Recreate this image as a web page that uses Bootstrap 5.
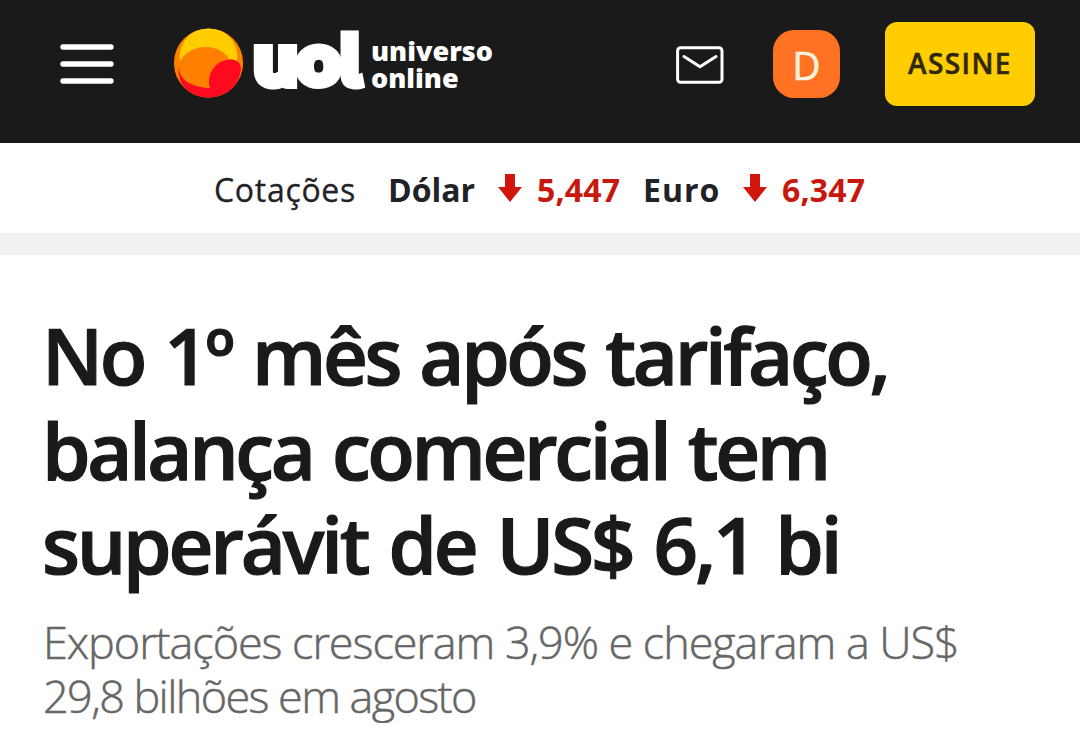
<!DOCTYPE html>
<html lang="pt-BR">
<head>
  <meta charset="UTF-8">
  <meta name="viewport" content="width=device-width, initial-scale=1.0">
  <title>UOL</title>
  <link href="https://cdn.jsdelivr.net/npm/bootstrap@5.3.0/dist/css/bootstrap.min.css" rel="stylesheet">
  <style>
    body { font-family: "Open Sans", "Noto Sans", sans-serif; color: #1a1a1a; overflow: hidden; }
    svg { display: block; flex: none; overflow: visible; }
    .topbar { height: 143px; background: #1a1a1a; padding: 22px 45px 0 60px; }
    .topbar-inner { height: 84px; }
    .menu-btn { margin-right: 60px; }
    .logo-text { font-family: "Lato", sans-serif; font-weight: 300; font-size: 63px; stroke: #fff; stroke-width: 14; stroke-miterlimit: 2; }
    .logo-l { font-family: "Inter", sans-serif; font-weight: 900; font-size: 74px; font-feature-settings: "cv05"; stroke: #fff; stroke-width: 5; }
    .logo-tag { font-weight: 800; }
    .mail-btn { padding-top: 2px; }
    .avatar { width: 67px; height: 68px; border-radius: 21px; background: #ff7123; color: #fff3dc; font-size: 39px; line-height: 1; -webkit-text-stroke: .6px #fff3dc; margin: 0 45px 0 49px; padding-top: 1px; }
    .btn-assine { width: 150px; height: 84px; border-radius: 12px; background: #ffcd00; color: #2f2707; font-size: 28px; font-weight: 600; letter-spacing: 1.4px; -webkit-text-stroke: .5px #2f2707; padding: 0 0 3px; }
    .quotes { height: 90px; display: grid; grid-template-columns: 174px 108.5px 40.5px 106px 99px 40px 90px; font-size: 32px; line-height: 44px; padding: 25px 0 0 214px; color: #1f2226; white-space: nowrap; }
    .quotes svg { margin-top: -1px; }
    .quotes .q-title { letter-spacing: .7px; -webkit-text-stroke: .3px #1f2226; }
    .quotes .q-euro { letter-spacing: 1px; }
    .quotes .fall { color: #c8170d; letter-spacing: .2px; }
    .strip { height: 22px; background: #f0f0f0; }
    .story { padding: 53px 40px 0 43px; }
    .story h1 { font-size: 78px; line-height: 94.5px; font-weight: 600; letter-spacing: -3.4px; word-spacing: 3.4px; -webkit-text-stroke: 1.2px #1a1a1a; margin: 0 0 0 -1px; white-space: nowrap; }
    .story h1 .line-2 { letter-spacing: -3.4px; word-spacing: 2.6px; }
    .story h1 .line-3 { letter-spacing: -3.2px; word-spacing: 4px; }
    .story p { font-size: 45px; line-height: 54px; font-weight: 300; letter-spacing: -1.07px; color: #666; -webkit-text-stroke: .5px #666; margin: 23px 0 0; white-space: nowrap; }
    .story .tight { letter-spacing: -1.6px; }
  </style>
</head>
<body class="bg-white">
<header class="topbar">
  <div class="topbar-inner d-flex align-items-center">
    <a href="#" class="menu-btn" aria-label="Menu">
      <svg width="54" height="42" viewBox="0 0 54 42" stroke="#fff" stroke-width="5.4" stroke-linecap="round">
        <path d="M3 4h48M3 21h48M3 38h48"/>
      </svg>
    </a>
    <a href="#" class="d-block">
      <svg width="322" height="84" viewBox="174 22 322 84">
        <defs><clipPath id="ball"><circle cx="208.5" cy="63" r="34.6"/></clipPath></defs>
        <g clip-path="url(#ball)">
          <rect x="173" y="28" width="71" height="71" fill="#ff8000"/>
          <circle cx="208.5" cy="57" r="29" fill="#ffcd00"/>
          <path d="M179 65C178 82 194 87 210 88C206 80 209 68 220 62C231 56 241 60 241 69C239 85 229 99 208 99C190 99 176 84 179 65Z" fill="#ff0a1e"/>
          <path d="M179 64C182 54 193 47 206 47C217 47 225 52 229 59C214 61 206 76 210 88C192 87 182 77 179 64Z" fill="#ff8000"/>
        </g>
        <g fill="#fff">
          <text class="logo-text" transform="translate(253 82) scale(1.12 1)" x="3 41">uo</text>
          <text class="logo-l" transform="translate(339.5 87) scale(.93 1)">l</text>
          <text class="logo-tag" font-size="27" x="371" y="61">universo</text>
          <text class="logo-tag" font-size="27" x="371" y="88">online</text>
        </g>
      </svg>
    </a>
    <a href="#" class="mail-btn ms-auto" aria-label="E-mail">
      <svg width="48" height="38" viewBox="0 0 48 38" fill="none" stroke="#fff" stroke-width="3" stroke-linecap="round" stroke-linejoin="round">
        <rect x="1.6" y="1.8" width="44.4" height="34.4" rx="3"/>
        <path d="M8 10.5l16 10.3L40 10.5"/>
      </svg>
    </a>
    <div class="avatar d-flex align-items-center justify-content-center">D</div>
    <button type="button" class="btn btn-assine">ASSINE</button>
  </div>
</header>

<section class="quotes">
  <span class="q-title">Cotações</span>
  <strong>Dólar</strong>
  <svg width="26" height="44" viewBox="0 0 26 44" fill="#d3160d"><path d="M8 7h10v13h7L13 35 1 20h7z"/></svg>
  <strong class="fall">5,447</strong>
  <strong class="q-euro">Euro</strong>
  <svg width="26" height="44" viewBox="0 0 26 44" fill="#d3160d"><path d="M8 7h10v13h7L13 35 1 20h7z"/></svg>
  <strong class="fall">6,347</strong>
</section>
<div class="strip"></div>

<main class="story">
  <h1>No 1º mês após tarifaço,<br><span class="line-2">balança comercial tem</span><br><span class="line-3">superávit de US$ 6,1 bi</span></h1>
  <p>Exportações cresceram 3,9% e chegaram a US$<br><span class="tight">29,8 bilhões em agosto</span></p>
</main>
<script src="https://cdn.jsdelivr.net/npm/bootstrap@5.3.0/dist/js/bootstrap.bundle.min.js"></script>
</body>
</html>
